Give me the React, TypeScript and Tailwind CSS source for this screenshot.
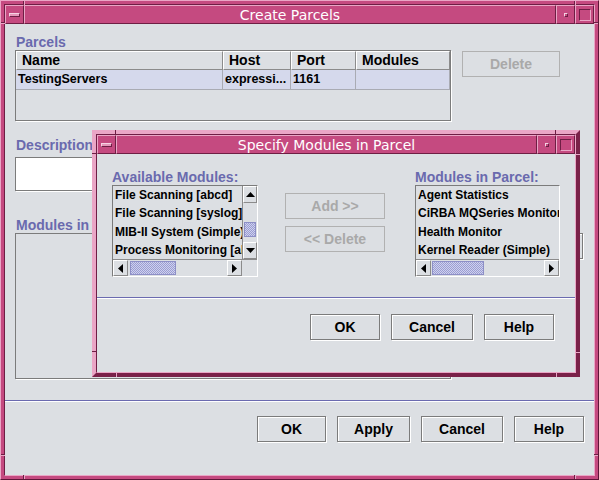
import React from 'react';

const raised = 'border border-t-white border-l-white border-r-[#8b8b8b] border-b-[#8b8b8b]';
const vTick = 'absolute w-[2px] border-l border-r border-l-[#6e1e44] border-r-[#eaa6c6]';
const hTick = 'absolute h-[2px] border-t border-b border-t-[#6e1e44] border-b-[#eaa6c6]';

function Tri({ dir }: { dir: 'up' | 'down' | 'left' | 'right' }) {
  const pts = {
    up: '4.5,0 9,5 0,5',
    down: '0,0 9,0 4.5,5',
    left: '5,0 5,9 0,4.5',
    right: '0,0 0,9 5,4.5',
  }[dir];
  const vertical = dir === 'up' || dir === 'down';
  return (
    <svg width={vertical ? 9 : 5} height={vertical ? 5 : 9} viewBox={vertical ? '0 0 9 5' : '0 0 5 9'}>
      <polygon points={pts} fill="#000" />
    </svg>
  );
}

function TitleBar({ title }: { title: string }) {
  return (
    <div className="flex h-[19px] flex-none bg-[#c54a80]">
      <div className="flex w-[19px] flex-none items-center justify-center border border-t-[#eaa6c6] border-l-[#eaa6c6] border-r-[#6e1e44] border-b-[#6e1e44]">
        <div className="h-[4px] w-[11px] border border-t-[#f6d3e3] border-l-[#f6d3e3] border-r-[#6e1e44] border-b-[#6e1e44] bg-[#e597ba]" />
      </div>
      <div className="flex flex-1 items-center justify-center border border-t-[#eaa6c6] border-l-[#eaa6c6] border-r-[#6e1e44] border-b-[#6e1e44] font-['DejaVu_Sans',sans-serif] text-[14px] leading-none text-white">
        {title}
      </div>
      <div className="flex w-[19px] flex-none items-center justify-center border border-t-[#eaa6c6] border-l-[#eaa6c6] border-r-[#6e1e44] border-b-[#6e1e44]">
        <div className="h-[4px] w-[4px] border border-t-[#f6d3e3] border-l-[#f6d3e3] border-r-[#6e1e44] border-b-[#6e1e44]" />
      </div>
      <div className="flex w-[19px] flex-none items-center justify-center border border-t-[#eaa6c6] border-l-[#eaa6c6] border-r-[#6e1e44] border-b-[#6e1e44]">
        <div className="h-[12px] w-[12px] border border-t-[#6e1e44] border-l-[#6e1e44] border-r-[#eaa6c6] border-b-[#eaa6c6]" />
      </div>
    </div>
  );
}

function Label({ children }: { children: React.ReactNode }) {
  return (
    <div className="h-[16px] whitespace-nowrap text-[14px] font-bold leading-[16px] text-[#6a6aae]">
      {children}
    </div>
  );
}

function Button({ label, className = '', disabled }: { label: string; className?: string; disabled?: boolean }) {
  return (
    <div
      className={`flex h-[26px] flex-none items-center justify-center border text-[14px] font-bold ${
        disabled
          ? 'border-[#b1b1b1] text-[#a9a9a9]'
          : 'border-[#7b7b7b] text-black shadow-[inset_1px_1px_0_#fff,1px_1px_0_#fff]'
      } ${className}`}
    >
      {label}
    </div>
  );
}

const thumb =
  'border border-[#8d8fc6] bg-[image:repeating-conic-gradient(#9a9dd2_0_25%,#cfd1ee_0_50%)] bg-[length:2px_2px]';

function HScroll({ thumbClass }: { thumbClass: string }) {
  return (
    <div className="flex h-full flex-1 border-t border-[#8b8b8b]">
      <div className={`flex w-[15px] flex-none items-center justify-center ${raised}`}>
        <Tri dir="left" />
      </div>
      <div className="flex flex-1 items-stretch py-[1px]">
        <div className={`${thumb} ${thumbClass}`} />
      </div>
      <div className={`flex w-[15px] flex-none items-center justify-center ${raised}`}>
        <Tri dir="right" />
      </div>
    </div>
  );
}

function VScroll() {
  return (
    <div className="flex w-[15px] flex-none flex-col border-l border-[#8b8b8b]">
      <div className={`flex h-[17px] flex-none items-center justify-center ${raised}`}>
        <Tri dir="up" />
      </div>
      <div className="flex flex-1 flex-col px-[1px]">
        <div className={`mt-[19px] h-[15px] ${thumb}`} />
      </div>
      <div className={`flex h-[17px] flex-none items-center justify-center ${raised}`}>
        <Tri dir="down" />
      </div>
    </div>
  );
}

function ListBox({
  items,
  className,
  vbar,
  thumbClass,
}: {
  items: string[];
  className: string;
  vbar?: boolean;
  thumbClass: string;
}) {
  return (
    <div
      className={`flex h-[92px] flex-col border border-t-[#7b7b7b] border-l-[#7b7b7b] border-r-white border-b-white ${className}`}
    >
      <div className="flex h-[73px] flex-none">
        <div className="min-w-0 flex-1 overflow-hidden whitespace-nowrap pl-[2px] text-[12px] font-bold leading-[18.3px] text-black">
          {items.map((it) => (
            <div key={it}>{it}</div>
          ))}
        </div>
        {vbar && <VScroll />}
      </div>
      <div className="flex flex-1">
        <HScroll thumbClass={thumbClass} />
        {vbar && <div className="w-[15px] flex-none border-t border-[#8b8b8b]" />}
      </div>
    </div>
  );
}

const cols = [
  { name: 'Name', w: 'w-[207px]', val: 'TestingServers' },
  { name: 'Host', w: 'w-[68px]', val: 'expressi...' },
  { name: 'Port', w: 'w-[65px]', val: '1161' },
  { name: 'Modules', w: 'w-[94px]', val: '' },
];

function ParcelTable() {
  return (
    <div className="h-[71px] w-[436px] flex-none border border-[#7b7b7b] shadow-[1px_1px_0_#fff]">
      <div className="flex h-[19px]">
        {cols.map((c) => (
          <div
            key={c.name}
            className={`${c.w} flex flex-none items-center border border-t-white border-l-white border-r-[#8b8b8b] border-b-[#8b8b8b] pl-[5px] text-[14px] font-bold text-black`}
          >
            {c.name}
          </div>
        ))}
      </div>
      <div className="flex h-[20px]">
        {cols.map((c) => (
          <div
            key={c.name}
            className={`${c.w} flex flex-none items-center overflow-hidden whitespace-nowrap border-r border-b border-[#a9abb3] bg-[#d5d9ec] pl-[2px] text-[12.5px] font-bold text-black`}
          >
            {c.val}
          </div>
        ))}
      </div>
    </div>
  );
}

function ModulesDialog() {
  return (
    <div className="absolute left-[91px] top-[129px] h-[247px] w-[488px] border-[4px] border-t-[#eaa6c6] border-l-[#eaa6c6] border-r-[#7a2149] border-b-[#7a2149] bg-[#c54a80]">
      {/* resize handle marks */}
      <div className={`${vTick} -top-[4px] left-[19px] h-[4px]`} />
      <div className={`${vTick} -top-[4px] left-[459px] h-[4px]`} />
      <div className={`${vTick} -bottom-[4px] left-[19px] h-[4px]`} />
      <div className={`${vTick} -bottom-[4px] left-[459px] h-[4px]`} />
      <div className={`${hTick} -left-[4px] top-[19px] w-[4px]`} />
      <div className={`${hTick} -left-[4px] top-[217px] w-[4px]`} />
      <div className={`${hTick} -right-[4px] top-[19px] w-[4px]`} />
      <div className={`${hTick} -right-[4px] top-[217px] w-[4px]`} />
      <div className="flex h-full flex-col border border-t-[#6e1e44] border-l-[#6e1e44] border-r-[#eaa6c6] border-b-[#eaa6c6]">
        <TitleBar title="Specify Modules in Parcel" />
        <div className="flex flex-1 flex-col bg-[#dcdfe3] pt-[15px]">
          <div className="flex items-start pl-[15px]">
            <div className="w-[146px] flex-none">
              <Label>Available Modules:</Label>
              <ListBox
                className="w-[146px]"
                vbar
                thumbClass="ml-[2px] w-[46px]"
                items={['File Scanning [abcd]', 'File Scanning [syslog]', 'MIB-II System (Simple)', 'Process Monitoring [all]']}
              />
            </div>
            <div className="ml-[27px] mt-[24px] flex w-[100px] flex-none flex-col gap-[7px]">
              <Button label="Add >>" disabled className="h-[25px] w-[100px]" />
              <Button label="<< Delete" disabled className="h-[25px] w-[100px]" />
            </div>
            <div className="ml-[30px] w-[145px] flex-none">
              <Label>Modules in Parcel:</Label>
              <ListBox
                className="w-[145px]"
                thumbClass="ml-[1px] w-[52px]"
                items={['Agent Statistics', 'CiRBA MQSeries Monitor', 'Health Monitor', 'Kernel Reader (Simple)']}
              />
            </div>
          </div>
          <div className="mt-[20px] h-px bg-[#6b6bb0]" />
          <div className="h-px bg-white" />
          <div className="mt-[15px] flex justify-end gap-[11px] pr-[21px]">
            <Button label="OK" className="w-[70px]" />
            <Button label="Cancel" className="w-[82px]" />
            <Button label="Help" className="w-[70px]" />
          </div>
        </div>
      </div>
    </div>
  );
}

export default function App() {
  return (
    <div className="relative h-[480px] w-[599px] overflow-hidden border border-t-[#eaa6c6] border-l-[#eaa6c6] border-r-[#5e1638] border-b-[#5e1638] bg-[#c54a80] p-[3px] font-['Liberation_Sans',Arial,sans-serif]">
      {/* resize handle marks */}
      <div className={`${vTick} -top-[1px] left-[22px] h-[5px]`} />
      <div className={`${vTick} -top-[1px] left-[573px] h-[5px]`} />
      <div className={`${vTick} -bottom-[1px] left-[22px] h-[5px]`} />
      <div className={`${vTick} -bottom-[1px] left-[573px] h-[5px]`} />
      <div className={`${hTick} -left-[1px] top-[21px] w-[5px]`} />
      <div className={`${hTick} -left-[1px] top-[453px] w-[5px]`} />
      <div className={`${hTick} -right-[1px] top-[21px] w-[5px]`} />
      <div className={`${hTick} -right-[1px] top-[453px] w-[5px]`} />
      <div className="flex h-full flex-col border border-t-[#6e1e44] border-l-[#6e1e44] border-r-[#eaa6c6] border-b-[#eaa6c6]">
        <TitleBar title="Create Parcels" />
        <div className="flex flex-1 flex-col bg-[#dcdfe3] pt-[10px]">
          <div className="px-[10px]">
            <div className="pl-[1px]">
              <Label>Parcels</Label>
            </div>
            <div className="flex items-start gap-[11px]">
              <ParcelTable />
              <Button label="Delete" disabled className="mt-[1px] w-[98px]" />
            </div>
            <div className="mt-[16px] pl-[1px]">
              <Label>Description:</Label>
            </div>
            <div className="mt-[4px] h-[34px] w-[436px] border border-[#7b7b7b] bg-white shadow-[1px_1px_0_#fff]" />
            <div className="mt-[26px] pl-[1px]">
              <Label>Modules in Parcel:</Label>
            </div>
            <div className="flex items-start gap-[11px]">
              <div className="h-[146px] w-[436px] flex-none border border-[#7b7b7b] shadow-[1px_1px_0_#fff]" />
              <Button label="Edit..." className="w-[121px]" />
            </div>
          </div>
          <div className="mt-[21px] h-px bg-[#6b6bb0]" />
          <div className="h-px bg-white" />
          <div className="mt-[14px] flex justify-end gap-[11px] pr-[10px]">
            <Button label="OK" className="w-[69px]" />
            <Button label="Apply" className="w-[73px]" />
            <Button label="Cancel" className="w-[82px]" />
            <Button label="Help" className="w-[70px]" />
          </div>
        </div>
      </div>
      <ModulesDialog />
    </div>
  );
}
